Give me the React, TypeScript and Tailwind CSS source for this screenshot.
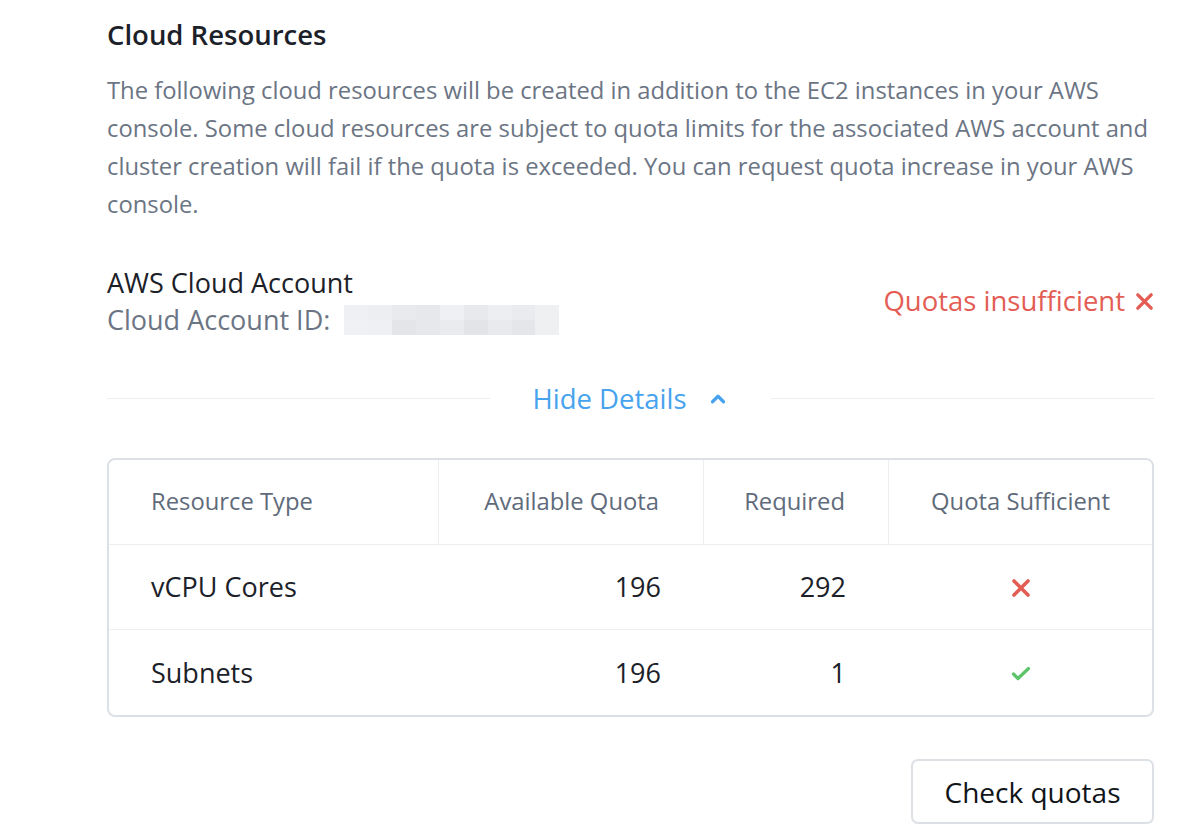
import { ChevronUp } from 'lucide-react';

interface QuotaRow {
  name: string;
  available: number;
  required: number;
}

const rows: QuotaRow[] = [
  { name: 'vCPU Cores', available: 196, required: 292 },
  { name: 'Subnets', available: 196, required: 1 },
];

function CrossIcon({ className }: { className?: string }) {
  return (
    <svg viewBox="0 0 20 20" fill="none" className={className}>
      <path d="M3 3L17 17M17 3L3 17" stroke="currentColor" strokeWidth="3.6" strokeLinecap="round" />
    </svg>
  );
}

function CheckIcon({ className }: { className?: string }) {
  return (
    <svg viewBox="0 0 20 15" fill="none" className={className}>
      <path d="M2.5 8L7 12.5L17.5 2.5" stroke="currentColor" strokeWidth="3.2" strokeLinecap="round" strokeLinejoin="round" />
    </svg>
  );
}

export default function App() {
  return (
    <div className="min-h-screen bg-white" style={{ fontFamily: '"Open Sans", Lato, sans-serif' }}>
      <div className="ml-[107px] w-[1047px] pt-[17px]">
        <h2 className="text-[27.5px] font-semibold leading-[36px] text-[#1c2129]">Cloud Resources</h2>

        <p className="mt-[18px] text-[23.8px] leading-[38px] text-[#6b7584]">
          The following cloud resources will be created in addition to the EC2 instances in your AWS console. Some
          cloud resources are subject to quota limits for the associated AWS account and cluster creation will fail if
          the quota is exceeded. You can request quota increase in your AWS console.
        </p>

        {/* Account + status */}
        <div className="mt-[41px] flex items-center justify-between">
          <div>
            <div className="text-[27px] leading-[37px] text-[#1c2129]">AWS Cloud Account</div>
            <div className="flex items-center text-[27px] leading-[37px] text-[#6b7584]">
              <span>Cloud Account ID:</span>
              <span className="ml-[14px] grid h-[30px] w-[215px] grid-cols-9 grid-rows-2">
                <span className="bg-[#eef0f3]" />
                <span className="bg-[#eceef1]" />
                <span className="bg-[#e8eaee]" />
                <span className="bg-[#e6e8ec]" />
                <span className="bg-[#eff0f3]" />
                <span className="bg-[#e7e9ed]" />
                <span className="bg-[#eceef1]" />
                <span className="bg-[#e9ebee]" />
                <span className="bg-[#eef0f2]" />
                <span className="bg-[#f0f1f4]" />
                <span className="bg-[#eef0f3]" />
                <span className="bg-[#e3e5e9]" />
                <span className="bg-[#e6e8ec]" />
                <span className="bg-[#e9ebee]" />
                <span className="bg-[#e2e4e8]" />
                <span className="bg-[#e8eaed]" />
                <span className="bg-[#e4e6ea]" />
                <span className="bg-[#eef0f2]" />
              </span>
            </div>
          </div>
          <div className="flex items-center gap-[10px] text-[27.5px] text-[#e35d55]">
            <span>Quotas insufficient</span>
            <CrossIcon className="h-[19px] w-[19px]" />
          </div>
        </div>

        {/* Divider with toggle */}
        <div className="mt-[40px] flex items-center">
          <div className="h-px flex-1 bg-[#eceef1]" />
          <button className="flex items-center gap-[20px] px-[42px] text-[27.5px] text-[#47a3ee]">
            <span>Hide Details</span>
            <ChevronUp className="h-[22px] w-[22px]" strokeWidth={3.5} />
          </button>
          <div className="h-px flex-1 bg-[#eceef1]" />
        </div>

        {/* Quota table */}
        <div className="mt-[39px] overflow-hidden rounded-[8px] border-2 border-[#dde1e6]">
          <div className="grid h-[85px] grid-cols-[330px_265px_185px_1fr] border-b border-[#eceef1] text-[23.8px] text-[#5f6b7b]">
            <div className="flex items-center border-r border-[#eceef1] pl-[42px]">Resource Type</div>
            <div className="flex items-center justify-end border-r border-[#eceef1] pr-[44px]">Available Quota</div>
            <div className="flex items-center justify-end border-r border-[#eceef1] pr-[43px]">Required</div>
            <div className="flex items-center justify-center">Quota Sufficient</div>
          </div>
          {rows.map((row, i) => {
            const ok = row.available >= row.required;
            return (
              <div
                key={row.name}
                className={`grid h-[85px] grid-cols-[330px_265px_185px_1fr] text-[27px] text-[#1c2129] ${
                  i < rows.length - 1 ? 'border-b border-[#eceef1]' : ''
                }`}
              >
                <div className="flex items-center pl-[42px]">{row.name}</div>
                <div className="flex items-center justify-end pr-[43px]">{row.available}</div>
                <div className="flex items-center justify-end pr-[43px]">{row.required}</div>
                <div className="flex items-center justify-center">
                  {ok ? (
                    <CheckIcon className="mt-[2px] h-[15px] w-[20px] text-[#5cc46b]" />
                  ) : (
                    <CrossIcon className="mt-[2px] h-[20px] w-[20px] text-[#e35d55]" />
                  )}
                </div>
              </div>
            );
          })}
        </div>

        <div className="mt-[42px] flex justify-end">
          <button className="h-[65px] w-[243px] rounded-[7px] border-2 border-[#dde1e6] text-[28px] text-[#111418]">
            Check quotas
          </button>
        </div>
      </div>
    </div>
  );
}
